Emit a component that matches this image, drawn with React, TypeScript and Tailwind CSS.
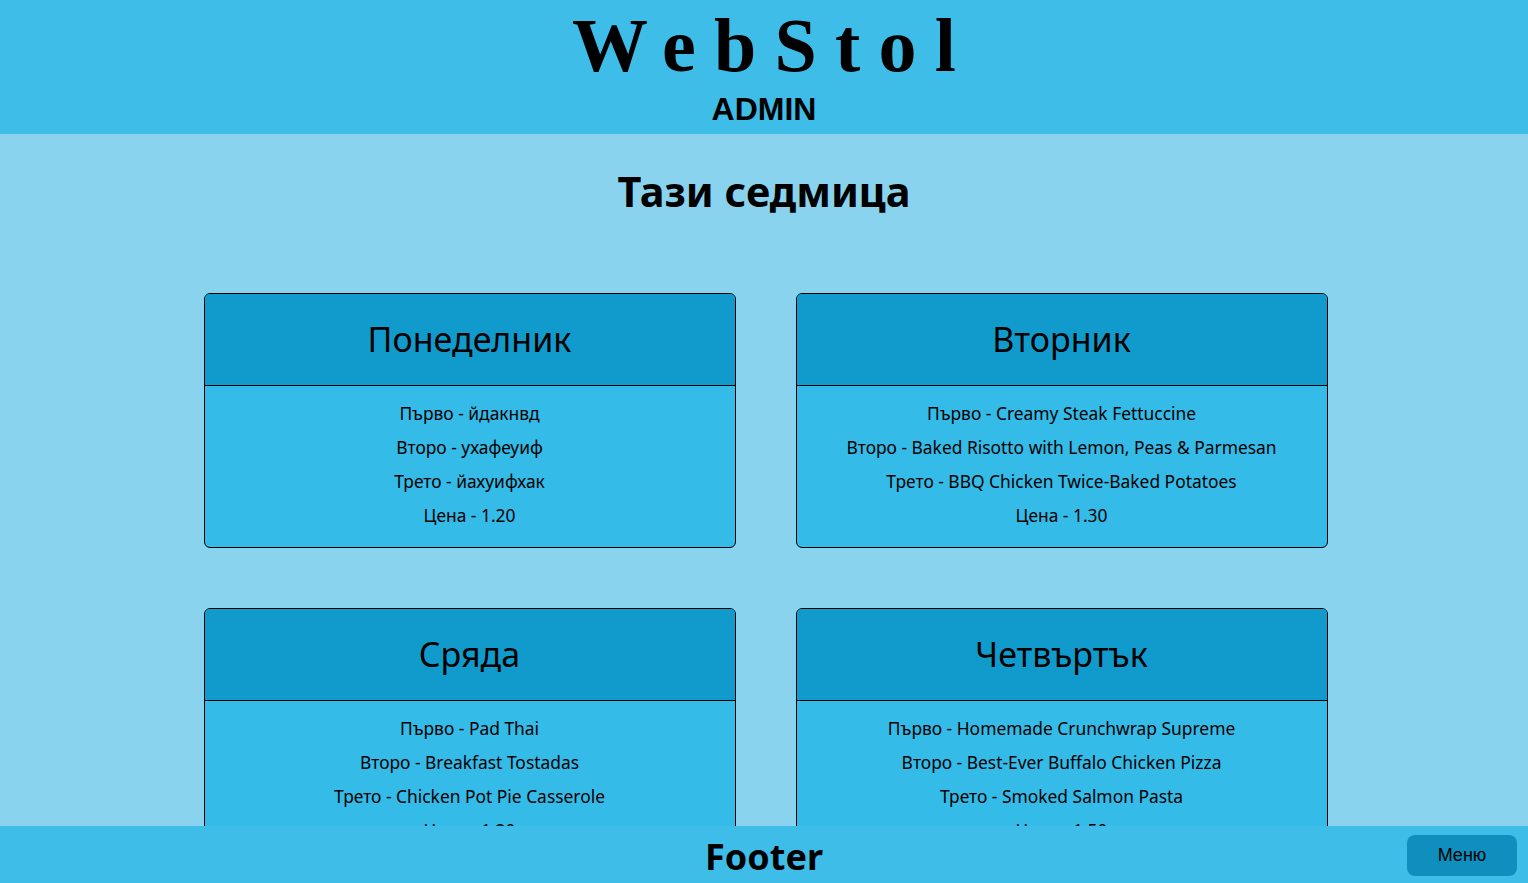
const days = [
  {
    name: 'Понеделник',
    first: 'йдакнвд',
    second: 'ухафеуиф',
    third: 'йахуифхак',
    price: '1.20',
  },
  {
    name: 'Вторник',
    first: 'Creamy Steak Fettuccine',
    second: 'Baked Risotto with Lemon, Peas & Parmesan',
    third: 'BBQ Chicken Twice-Baked Potatoes',
    price: '1.30',
  },
  {
    name: 'Сряда',
    first: 'Pad Thai',
    second: 'Breakfast Tostadas',
    third: 'Chicken Pot Pie Casserole',
    price: '1.20',
  },
  {
    name: 'Четвъртък',
    first: 'Homemade Crunchwrap Supreme',
    second: 'Best-Ever Buffalo Chicken Pizza',
    third: 'Smoked Salmon Pasta',
    price: '1.50',
  },
];

const sans = 'font-["Segoe_UI","Noto_Sans","Open_Sans",sans-serif]';

function DayCard({ day }: { day: (typeof days)[number] }) {
  return (
    <div className="rounded-md border border-black bg-[#34bbe8] overflow-hidden">
      <div className="h-[92px] flex items-center justify-center bg-[#109bcc] border-b border-black">
        <h2 className="text-[34px] font-normal text-black">{day.name}</h2>
      </div>
      <div className="pt-[10px] pb-[15px] flex flex-col items-center text-[17.4px] leading-[34px] text-black">
        <p>Първо - {day.first}</p>
        <p>Второ - {day.second}</p>
        <p>Трето - {day.third}</p>
        <p>Цена - {day.price}</p>
      </div>
    </div>
  );
}

export default function App() {
  return (
    <div className={`relative h-screen overflow-hidden bg-[#89d3ef] ${sans}`}>
      {/* Header */}
      <header className="h-[134px] bg-[#3ebde9] flex flex-col items-center">
        <h1 className='mt-[4px] font-["Liberation_Serif","Times_New_Roman",serif] font-bold text-[76px] leading-[82px] tracking-[0.24em] pl-[0.24em] text-black'>
          WebStol
        </h1>
        <div className='mt-[5px] font-["Liberation_Sans",Arial,sans-serif] font-bold text-[32px] leading-[36px] text-black'>
          ADMIN
        </div>
      </header>

      {/* Content */}
      <main className="flex flex-col items-center">
        <h1 className="mt-[26px] text-[41.5px] leading-[62px] font-bold text-black">Тази седмица</h1>
        <div className="mt-[71px] grid grid-cols-[532px_532px] gap-x-[60px] gap-y-[60px] pl-[3px]">
          {days.map((d) => (
            <DayCard key={d.name} day={d} />
          ))}
        </div>
      </main>

      {/* Footer */}
      <footer className="absolute bottom-0 left-0 right-0 h-[57px] bg-[#3ebde9] flex items-center justify-center">
        <span className="mt-[5px] text-[36px] font-bold text-black">Footer</span>
        <button className='absolute right-[11px] top-[9px] w-[110px] h-[41px] rounded-lg bg-[#0e8fbd] font-["Liberation_Sans",Arial,sans-serif] text-[18px] text-black'>
          Меню
        </button>
      </footer>
    </div>
  );
}
